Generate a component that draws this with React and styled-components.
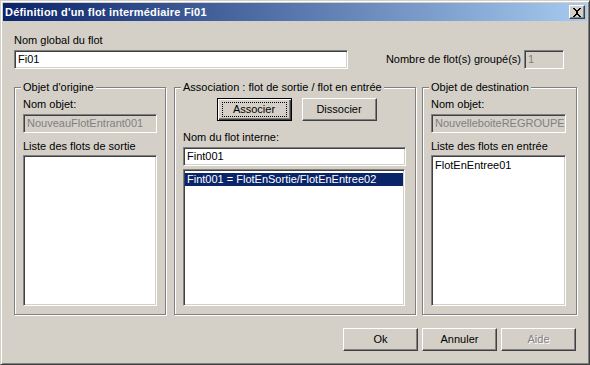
import React from 'react';
import styled, { createGlobalStyle } from 'styled-components';

const FACE = '#D4D0C8';
const SHADOW = '#808080';
const DARK = '#404040';

const GlobalStyle = createGlobalStyle`
  html, body {
    margin: 0;
    padding: 0;
    background: ${FACE};
  }
  * {
    box-sizing: border-box;
  }
`;

const Window = styled.div`
  width: 590px;
  height: 365px;
  padding: 2px;
  background: ${FACE};
  border: 1px solid;
  border-color: ${FACE} ${DARK} ${DARK} ${FACE};
  box-shadow: inset 1px 1px 0 #fff, inset -1px -1px 0 ${SHADOW};
  font-family: "Liberation Sans", Arial, sans-serif;
  font-size: 11px;
  line-height: 13px;
  color: #000;
  display: flex;
  flex-direction: column;
`;

const TitleBar = styled.div`
  height: 18px;
  display: flex;
  align-items: center;
  justify-content: space-between;
  padding: 0 2px 0 2px;
  background: linear-gradient(to right, #0A246A, #A6CAF0);
`;

const Title = styled.span`
  color: #fff;
  font-weight: bold;
  font-size: 11px;
  letter-spacing: 0.2px;
  white-space: nowrap;
`;

const CloseButton = styled.div`
  width: 16px;
  height: 14px;
  background: ${FACE};
  border: 1px solid;
  border-color: #fff ${DARK} ${DARK} #fff;
  box-shadow: inset -1px -1px 0 ${SHADOW};
  display: flex;
  align-items: center;
  justify-content: center;
`;

const Body = styled.div`
  flex: 1;
  display: flex;
  flex-direction: column;
  padding: 13px 9px 0 11px;
`;

const TopRow = styled.div`
  display: flex;
  align-items: flex-end;
  justify-content: space-between;
`;

const Field = styled.div`
  display: flex;
  flex-direction: column;
  width: ${p => p.$width || 'auto'};
`;

const InlineField = styled.div`
  display: flex;
  align-items: center;
  gap: 3px;
  margin-right: 14px;
`;

const Label = styled.div`
  white-space: nowrap;
  margin-top: ${p => p.$top || 0}px;
  margin-bottom: ${p => p.$bottom || 0}px;
`;

const Edit = styled.div`
  height: 19px;
  width: ${p => p.$width || '100%'};
  padding: 2px 3px 0;
  background: ${p => (p.$disabled ? FACE : '#fff')};
  color: ${p => (p.$disabled ? SHADOW : '#000')};
  border: 1px solid;
  border-color: ${SHADOW} #fff #fff ${SHADOW};
  box-shadow: inset 1px 1px 0 ${DARK}, inset -1px -1px 0 ${FACE};
  white-space: nowrap;
  overflow: hidden;
`;

const Groups = styled.div`
  display: flex;
  gap: 8px;
  margin-top: 18px;
  height: 228px;
`;

const Group = styled.div`
  width: ${p => p.$width}px;
  margin-left: ${p => p.$shift || 0}px;
  display: flex;
  flex-direction: column;
  padding: 0 ${p => p.$padRight || 8}px 8px 8px;
  border: 1px solid ${SHADOW};
  box-shadow: inset 1px 1px 0 #fff, 1px 1px 0 #fff;
`;

const Legend = styled.div`
  align-self: flex-start;
  margin: -7px 0 0 -2px;
  padding: 0 2px;
  background: ${FACE};
  white-space: nowrap;
`;

const ListBox = styled.div`
  flex: 1;
  padding: 3px 1px;
  background: #fff;
  border: 1px solid;
  border-color: ${SHADOW} #fff #fff ${SHADOW};
  box-shadow: inset 1px 1px 0 ${DARK}, inset -1px -1px 0 ${FACE};
  margin-top: ${p => p.$top || 0}px;
  width: ${p => p.$width || '100%'};
`;

const ListItem = styled.div`
  height: 13px;
  padding-left: 2px;
  white-space: nowrap;
  background: ${p => (p.$selected ? '#0A246A' : 'transparent')};
  color: ${p => (p.$selected ? '#fff' : '#000')};
`;

const ButtonRow = styled.div`
  display: flex;
  justify-content: ${p => p.$justify || 'flex-end'};
  gap: ${p => p.$gap || 4}px;
  margin-top: ${p => p.$top || 0}px;
  margin-right: ${p => p.$right || 0}px;
  margin-left: ${p => p.$left || 0}px;
`;

const Button = styled.div`
  width: 75px;
  height: 23px;
  display: flex;
  align-items: center;
  justify-content: center;
  background: ${FACE};
  border: 1px solid;
  border-color: ${p => (p.$default ? '#000' : `#fff ${DARK} ${DARK} #fff`)};
  box-shadow: ${p =>
    p.$default
      ? `inset 1px 1px 0 #fff, inset -1px -1px 0 ${DARK}, inset -2px -2px 0 ${SHADOW}`
      : `inset -1px -1px 0 ${SHADOW}`};
  color: ${p => (p.$disabled ? SHADOW : '#000')};
  text-shadow: ${p => (p.$disabled ? '1px 1px 0 #fff' : 'none')};
`;

const FocusRect = styled.span`
  display: flex;
  align-items: center;
  justify-content: center;
  width: 65px;
  height: 15px;
  border: 1px dotted #000;
`;

const App = () => (
  <>
    <GlobalStyle />
    <Window>
      <TitleBar>
        <Title>Définition d'un flot intermédiaire Fi01</Title>
        <CloseButton>
          <svg width="10" height="9" viewBox="0 0 10 9" shapeRendering="crispEdges">
            <path d="M1 0h2v1h1v1h2V1h1V0h2v1H8v1H7v1H6v3h1v1h1v1h1v1H7V8H6V7H4v1H3v1H1V8h1V7h1V6h1V3H3V2H2V1H1z" fill="#000" />
          </svg>
        </CloseButton>
      </TitleBar>

      <Body>
        <TopRow>
          <Field $width="334px">
            <Label $bottom={3}>Nom global du flot</Label>
            <Edit>Fi01</Edit>
          </Field>
          <InlineField>
            <Label>Nombre de flot(s) groupé(s)</Label>
            <Edit $disabled $width="40px">1</Edit>
          </InlineField>
        </TopRow>

        <Groups>
          <Group $width={152}>
            <Legend>Objet d'origine</Legend>
            <Label $top={4} $bottom={3}>Nom objet:</Label>
            <Edit $disabled>NouveauFlotEntrant001</Edit>
            <Label $top={7}>Liste des flots de sortie</Label>
            <ListBox $top={2} />
          </Group>

          <Group $width={242} $padRight={9}>
            <Legend>Association : flot de sortie / flot en entrée</Legend>
            <ButtonRow $justify="center" $gap={10} $top={4} $left={4}>
              <Button $default>
                <FocusRect>Associer</FocusRect>
              </Button>
              <Button>Dissocier</Button>
            </ButtonRow>
            <Label $top={10} $bottom={3}>Nom du flot interne:</Label>
            <Edit>Fint001</Edit>
            <ListBox $top={3} $width="222px">
              <ListItem $selected>Fint001 = FlotEnSortie/FlotEnEntree02</ListItem>
            </ListBox>
          </Group>

          <Group $width={155} $shift={-2} $padRight={10}>
            <Legend>Objet de destination</Legend>
            <Label $top={4} $bottom={3}>Nom objet:</Label>
            <Edit $disabled>NouvelleboiteREGROUPE</Edit>
            <Label $top={7}>Liste des flots en entrée</Label>
            <ListBox $top={2}>
              <ListItem>FlotEnEntree01</ListItem>
            </ListBox>
          </Group>
        </Groups>

        <ButtonRow $top={13} $right={2}>
          <Button>Ok</Button>
          <Button>Annuler</Button>
          <Button $disabled>Aide</Button>
        </ButtonRow>
      </Body>
    </Window>
  </>
);

export default App;
